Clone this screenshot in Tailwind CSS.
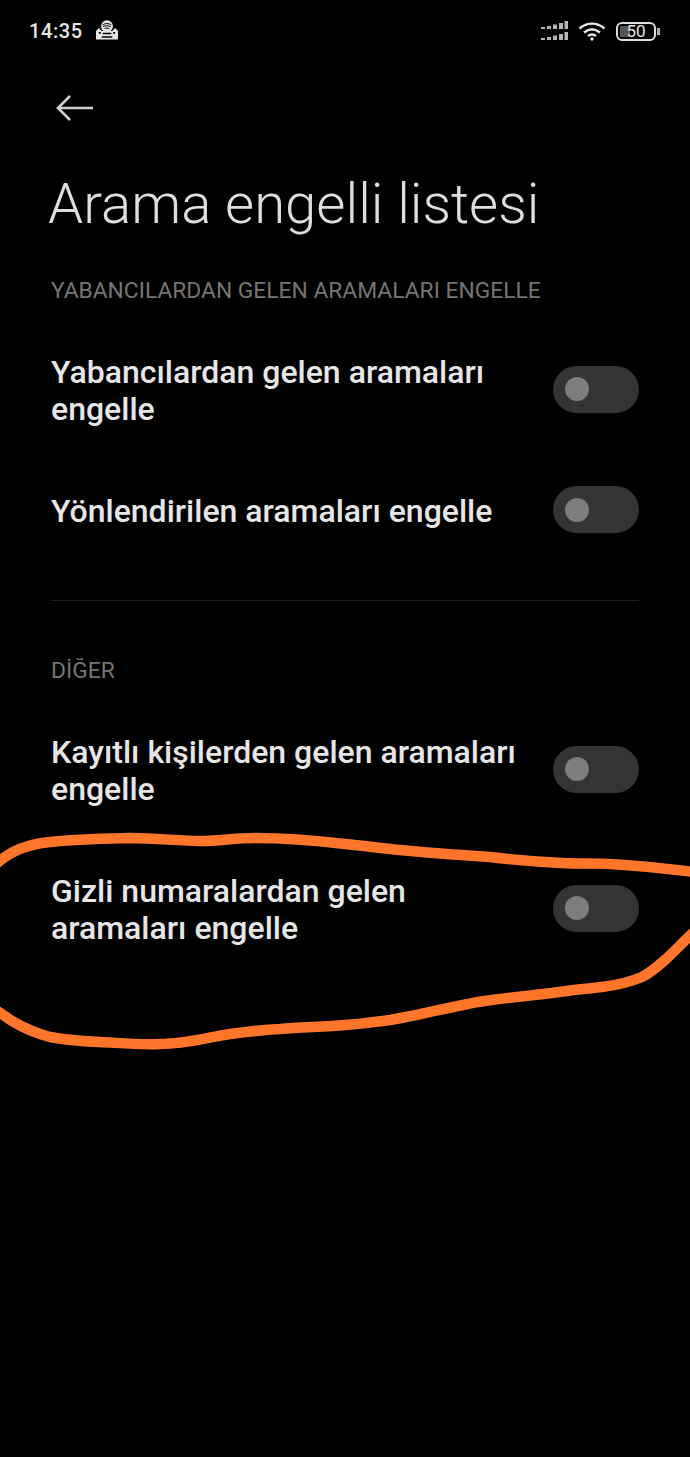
<!DOCTYPE html>
<html lang="tr">
  <head>
    <meta charset="UTF-8" />
    <meta name="viewport" content="width=device-width, initial-scale=1.0" />
    <title>Arama engelli listesi</title>
    <script src="https://cdn.jsdelivr.net/npm/@tailwindcss/browser@4"></script>
  </head>
  <body class="relative h-[1457px] w-[690px] overflow-hidden bg-black font-['Roboto',sans-serif]">
    <!-- Status bar -->
    <header class="flex h-[62px] items-center justify-between pl-[29px] pr-[30px] text-[#e6e6e6]">
      <div class="flex items-center gap-[13px]">
        <span class="text-[20px] font-medium leading-none tracking-[0.6px]">14:35</span>
        <svg class="-mt-[3px]" width="22" height="22" viewBox="0 0 23 22" fill="none">
          <circle cx="11.5" cy="7" r="6.2" fill="#e6e6e6" />
          <path d="M7 5.5c3-1.6 6-1.6 9 0M7 7.5c3-1.2 6-1.2 8.500 0M9 9.500c1.500-.7 3-.7 5 .2" stroke="#000" stroke-width="1" />
          <path d="M0 21v-9l3-3 3 3h11l3-3 3 3v9z" fill="#e6e6e6" />
          <path d="M3 13h2v2H3zM18 13h2v2h-2zM7 14h9v1.500H7zM6 17.500h11V19H6z" fill="#000" />
        </svg>
      </div>
      <div class="flex items-center gap-[10px]">
        <svg width="27" height="20" viewBox="0 0 27 20" fill="#b5b5b5">
          <path d="M0 6h4v2H0zM6 5h4v3H6zM12 3.500h4V8h-4zM18 2h4v6h-4zM23.500 0H27v8h-3.500z" />
          <path d="M0 17h4v2H0zM6 16h4v3H6zM12 14.500h4V19h-4zM18 13h4v6h-4zM23.500 11H27v8h-3.500z" />
        </svg>
        <svg width="28" height="20" viewBox="0 0 28 20" fill="none" stroke="#e6e6e6" stroke-width="2.400">
          <path d="M1.500 7.500c7.500-6.500 17.500-6.500 25 0" />
          <path d="M6 11.500c5-4 11-4 16 0" />
          <path d="M10 15c2.500-1.800 5.500-1.800 8 0" />
          <circle cx="14" cy="18" r="1.700" fill="#e6e6e6" stroke="none" />
        </svg>
        <div class="flex items-center gap-[1px]">
          <div class="relative flex h-[19px] w-[40px] items-center justify-center overflow-hidden rounded-[6px] border-2 border-[#dcdcdc]">
            <div class="absolute inset-y-[2px] left-[2px] w-[10px] rounded-[1px] bg-[#555]"></div>
            <span class="relative text-[17px] leading-none">50</span>
          </div>
          <div class="h-[7px] w-[3px] bg-[#b5b5b5]"></div>
        </div>
      </div>
    </header>

    <!-- Back arrow -->
    <div class="pl-[56px] pt-[33px]">
      <svg class="block" width="37" height="26" viewBox="0 0 37 26" fill="none" stroke="#d0d0d0" stroke-width="2.600">
        <path d="M1.500 13H37" />
        <path d="M14 1 2 13l12 12" />
      </svg>
    </div>

    <main class="pl-[51px] pr-[51px]">
      <h1 class="-ml-[3px] mt-[48px] text-[56.300px] font-light leading-[70px] text-[#dedede]">Arama engelli listesi</h1>

      <h2 class="mt-[37px] text-[22.800px] leading-[30px] text-[#757575]">YABANCILARDAN GELEN ARAMALARI ENGELLE</h2>

      <div class="mt-[48px] flex items-center justify-between">
        <p class="w-[470px] text-[32px] font-medium leading-[37px] text-[#e6e6e6]">Yabancılardan gelen aramaları engelle</p>
        <div class="flex h-[47px] w-[86px] -translate-y-[2px] items-center rounded-full bg-[#343434] pl-[12px]"><div class="h-[24px] w-[24px] rounded-full bg-[#7d7d7d]"></div></div>
      </div>

      <div class="mt-[60px] flex items-center justify-between">
        <p class="w-[470px] text-[32px] font-medium leading-[37px] text-[#e6e6e6]">Yönlendirilen aramaları engelle</p>
        <div class="flex h-[47px] w-[86px] -translate-y-[2px] items-center rounded-full bg-[#343434] pl-[12px]"><div class="h-[24px] w-[24px] rounded-full bg-[#7d7d7d]"></div></div>
      </div>

      <div class="mt-[65px] h-[1px] bg-[#1f1f1f]"></div>

      <h2 class="mt-[55px] text-[22.800px] leading-[30px] text-[#757575]">DİĞER</h2>

      <div class="mt-[48px] flex items-center justify-between">
        <p class="w-[480px] text-[32px] font-medium leading-[37px] text-[#e6e6e6]">Kayıtlı kişilerden gelen aramaları engelle</p>
        <div class="flex h-[47px] w-[86px] -translate-y-[2px] items-center rounded-full bg-[#343434] pl-[12px]"><div class="h-[24px] w-[24px] rounded-full bg-[#7d7d7d]"></div></div>
      </div>

      <div class="mt-[65px] flex items-center justify-between">
        <p class="w-[470px] text-[32px] font-medium leading-[37px] text-[#e6e6e6]">Gizli numaralardan gelen aramaları engelle</p>
        <div class="flex h-[47px] w-[86px] -translate-y-[2px] items-center rounded-full bg-[#343434] pl-[12px]"><div class="h-[24px] w-[24px] rounded-full bg-[#7d7d7d]"></div></div>
      </div>
    </main>

    <!-- Hand drawn orange circle on top of the screenshot -->
    <svg class="absolute left-0 top-0" width="690" height="1457" viewBox="0 0 690 1457" fill="none">
      <path d="M-4 864C8 853 22 846 42 843C70 839 100 839 130 838C155 838 180 841 200 841C220 841 235 838 255 838C285 838 320 841 345 844C365 846 380 848 400 850C430 853 460 855 490 857C515 860 540 862 562 863C580 864 592 863 610 864C630 865 660 868 694 872" stroke="#ff752a" stroke-width="10.500" stroke-linecap="round" />
      <path d="M694 932C685 940 675 951 665 960C657 967 650 973 642 977C630 982 618 985 602 987C585 989 570 990 552 993C528 996 503 998 478 1002C450 1007 420 1015 390 1020C375 1022 360 1024 345 1025C325 1027 300 1027 280 1029C260 1030 245 1032 230 1034C205 1038 185 1044 160 1044C140 1045 120 1043 100 1042C80 1041 65 1040 50 1037C35 1033 22 1027 12 1021L-4 1010" stroke="#ff752a" stroke-width="10.500" stroke-linecap="round" />
    </svg>
  </body>
</html>
